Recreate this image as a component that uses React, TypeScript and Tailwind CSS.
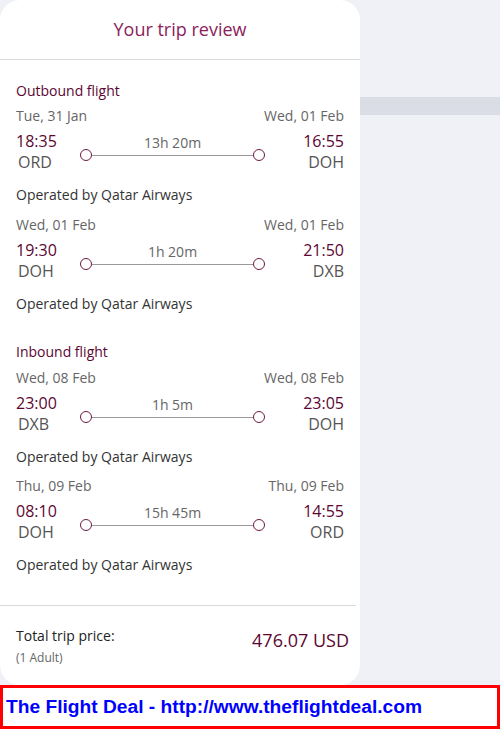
const font = { fontFamily: '"Open Sans", "Noto Sans", sans-serif' };

type Seg = {
  depDate: string;
  arrDate: string;
  depTime: string;
  arrTime: string;
  from: string;
  to: string;
  dur: string;
};

const outbound: Seg[] = [
  { depDate: "Tue, 31 Jan", arrDate: "Wed, 01 Feb", depTime: "18:35", arrTime: "16:55", from: "ORD", to: "DOH", dur: "13h 20m" },
  { depDate: "Wed, 01 Feb", arrDate: "Wed, 01 Feb", depTime: "19:30", arrTime: "21:50", from: "DOH", to: "DXB", dur: "1h 20m" },
];

const inbound: Seg[] = [
  { depDate: "Wed, 08 Feb", arrDate: "Wed, 08 Feb", depTime: "23:00", arrTime: "23:05", from: "DXB", to: "DOH", dur: "1h 5m" },
  { depDate: "Thu, 09 Feb", arrDate: "Thu, 09 Feb", depTime: "08:10", arrTime: "14:55", from: "DOH", to: "ORD", dur: "15h 45m" },
];

const Segment = ({ s }: { s: Seg }) => (
  <div>
    <div className="flex justify-between text-[14px] leading-[20px] text-[#666]">
      <span>{s.depDate}</span>
      <span>{s.arrDate}</span>
    </div>
    <div className="mt-[5px] flex items-center">
      <div className="flex flex-col">
        <span className="text-[16px] leading-[21px] text-[#5c0632]">{s.depTime}</span>
        <span className="pl-[2px] text-[16px] leading-[21px] text-[#555]">{s.from}</span>
      </div>
      <div className="relative ml-[23px] mr-[38px] flex flex-1 items-center pt-[6px]">
        <span className="h-[12px] w-[12px] shrink-0 rounded-full border-[1.5px] border-[#6b1a45]" />
        <span className="h-px flex-1 bg-[#999]" />
        <span className="h-[12px] w-[12px] shrink-0 rounded-full border-[1.5px] border-[#6b1a45]" />
        <span className="absolute left-0 right-0 top-[-10px] text-center text-[14px] leading-[20px] text-[#666]">{s.dur}</span>
      </div>
      <div className="flex flex-col items-end">
        <span className="text-[16px] leading-[21px] text-[#5c0632]">{s.arrTime}</span>
        <span className="text-[16px] leading-[21px] text-[#555]">{s.to}</span>
      </div>
    </div>
    <div className="mt-[12px] text-[14px] leading-[20px] text-[#333]">Operated by Qatar Airways</div>
  </div>
);

export default function App() {
  return (
    <div className="flex h-[729px] w-[500px] flex-col bg-[#f0f1f7]" style={font}>
      <div className="flex flex-1">
        <div className="w-[360px] rounded-[20px] bg-white">
          <div className="h-[60px] border-b border-[#d9d9d9] pt-[16px] text-center text-[18px] leading-[26px] text-[#8c1d5c]">
            Your trip review
          </div>
          <div className="px-[16px] pt-[21px]">
            <div className="text-[14px] leading-[20px] text-[#5c0632]">Outbound flight</div>
            <div className="mt-[5px] flex flex-col gap-[10px]">
              {outbound.map((s) => (
                <Segment key={s.depTime} s={s} />
              ))}
            </div>
            <div className="mt-[28px] text-[14px] leading-[20px] text-[#5c0632]">Inbound flight</div>
            <div className="mt-[6px] flex flex-col gap-[9px]">
              {inbound.map((s) => (
                <Segment key={s.depTime} s={s} />
              ))}
            </div>
          </div>
          <div className="mr-[4px] mt-[30px] border-t border-[#d9d9d9]" />
          <div className="flex justify-between pl-[16px] pr-[11px] pt-[20px]">
            <div className="flex flex-col">
              <span className="text-[14px] leading-[20px] text-[#222]">Total trip price:</span>
              <span className="mt-[3px] text-[12px] leading-[18px] text-[#666]">(1 Adult)</span>
            </div>
            <span className="pt-[1px] text-[18px] leading-[26px] text-[#5c0632]">476.07 USD</span>
          </div>
        </div>
        <div className="flex-1 pt-[97px]">
          <div className="h-[18px] bg-[#dadce6]" />
        </div>
      </div>
      <div className="flex h-[44px] items-center border-[3px] border-[#ff0000] bg-white px-[3px]">
        <span className="text-[19.2px] font-bold text-[#0000ff]" style={{ fontFamily: '"Liberation Sans", Arial, sans-serif' }}>
          The Flight Deal - http://www.theflightdeal.com
        </span>
      </div>
    </div>
  );
}
